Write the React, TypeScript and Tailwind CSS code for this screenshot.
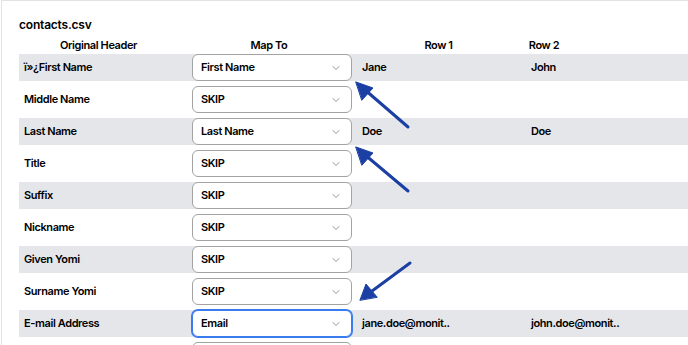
import { ChevronDown } from "lucide-react";

const rows = [
  { header: "ï»¿First Name", map: "First Name", r1: "Jane", r2: "John" },
  { header: "Middle Name", map: "SKIP", r1: "", r2: "" },
  { header: "Last Name", map: "Last Name", r1: "Doe", r2: "Doe" },
  { header: "Title", map: "SKIP", r1: "", r2: "" },
  { header: "Suffix", map: "SKIP", r1: "", r2: "" },
  { header: "Nickname", map: "SKIP", r1: "", r2: "" },
  { header: "Given Yomi", map: "SKIP", r1: "", r2: "" },
  { header: "Surname Yomi", map: "SKIP", r1: "", r2: "" },
  { header: "E-mail Address", map: "Email", r1: "jane.doe@monit..", r2: "john.doe@monit.." },
  { header: "", map: "", r1: "", r2: "" },
];

const Select = ({ value, focused }: { value: string; focused?: boolean }) => (
  <div
    className={
      focused
        ? "flex h-[27px] w-[160px] items-center justify-between rounded-[6px] border border-[#3b7bf0] bg-white pl-[8px] pr-[9px] ring-1 ring-[#3b7bf0]"
        : "flex h-[27px] w-[160px] items-center justify-between rounded-[6px] border border-[#a3a3a3] bg-white pl-[8px] pr-[9px]"
    }
  >
    <span>{value}</span>
    <ChevronDown size={12} strokeWidth={1.6} className="text-[#7a7a7a]" />
  </div>
);

const Arrows = () => (
  <svg className="pointer-events-none absolute left-0 top-0" width="688" height="345">
    <g stroke="#1b3fa3" strokeWidth="3" strokeLinecap="round" fill="#1b3fa3">
      <line x1="408" y1="127" x2="364" y2="89" />
      <polygon points="356,82 373,88 362,100" strokeWidth="1" strokeLinejoin="round" />
      <line x1="408" y1="191" x2="364" y2="154" />
      <polygon points="356,147 373,153 362,165" strokeWidth="1" strokeLinejoin="round" />
      <line x1="410" y1="263" x2="368" y2="294" />
      <polygon points="360,300 366,284 377,297" strokeWidth="1" strokeLinejoin="round" />
    </g>
  </svg>
);

export default function App() {
  return (
    <div className="relative h-[345px] w-[688px] overflow-hidden bg-white font-['Inter',sans-serif] text-[11px] font-semibold tracking-[-0.4px] text-black">
      <div className="ml-px h-full border-l border-t border-[#e3e3e3] pl-[17px] pt-[15px]">
        <h2 className="text-[12px] font-semibold leading-[18px] tracking-[-0.2px] text-black">contacts.csv</h2>
        <div className="mt-[3px] flex h-[17px] items-center">
          <div className="w-[159px] text-center">Original Header</div>
          <div className="w-[182px] text-center">Map To</div>
          <div className="w-[157px] text-center">Row 1</div>
          <div className="w-[54px] text-center">Row 2</div>
        </div>
        <div className="flex flex-col gap-[5px]">
          {rows.map((row, i) => (
            <div
              key={i}
              className={i % 2 === 0 ? "flex h-[27px] items-center bg-[#e5e6ea]" : "flex h-[27px] items-center"}
            >
              <div className="w-[173px] pl-[5px]">{row.header}</div>
              <Select value={row.map} focused={row.map === "Email"} />
              <div className="w-[168px] pl-[10px]">{row.r1}</div>
              <div className="pl-[11px]">{row.r2}</div>
            </div>
          ))}
        </div>
      </div>
      <Arrows />
    </div>
  );
}
